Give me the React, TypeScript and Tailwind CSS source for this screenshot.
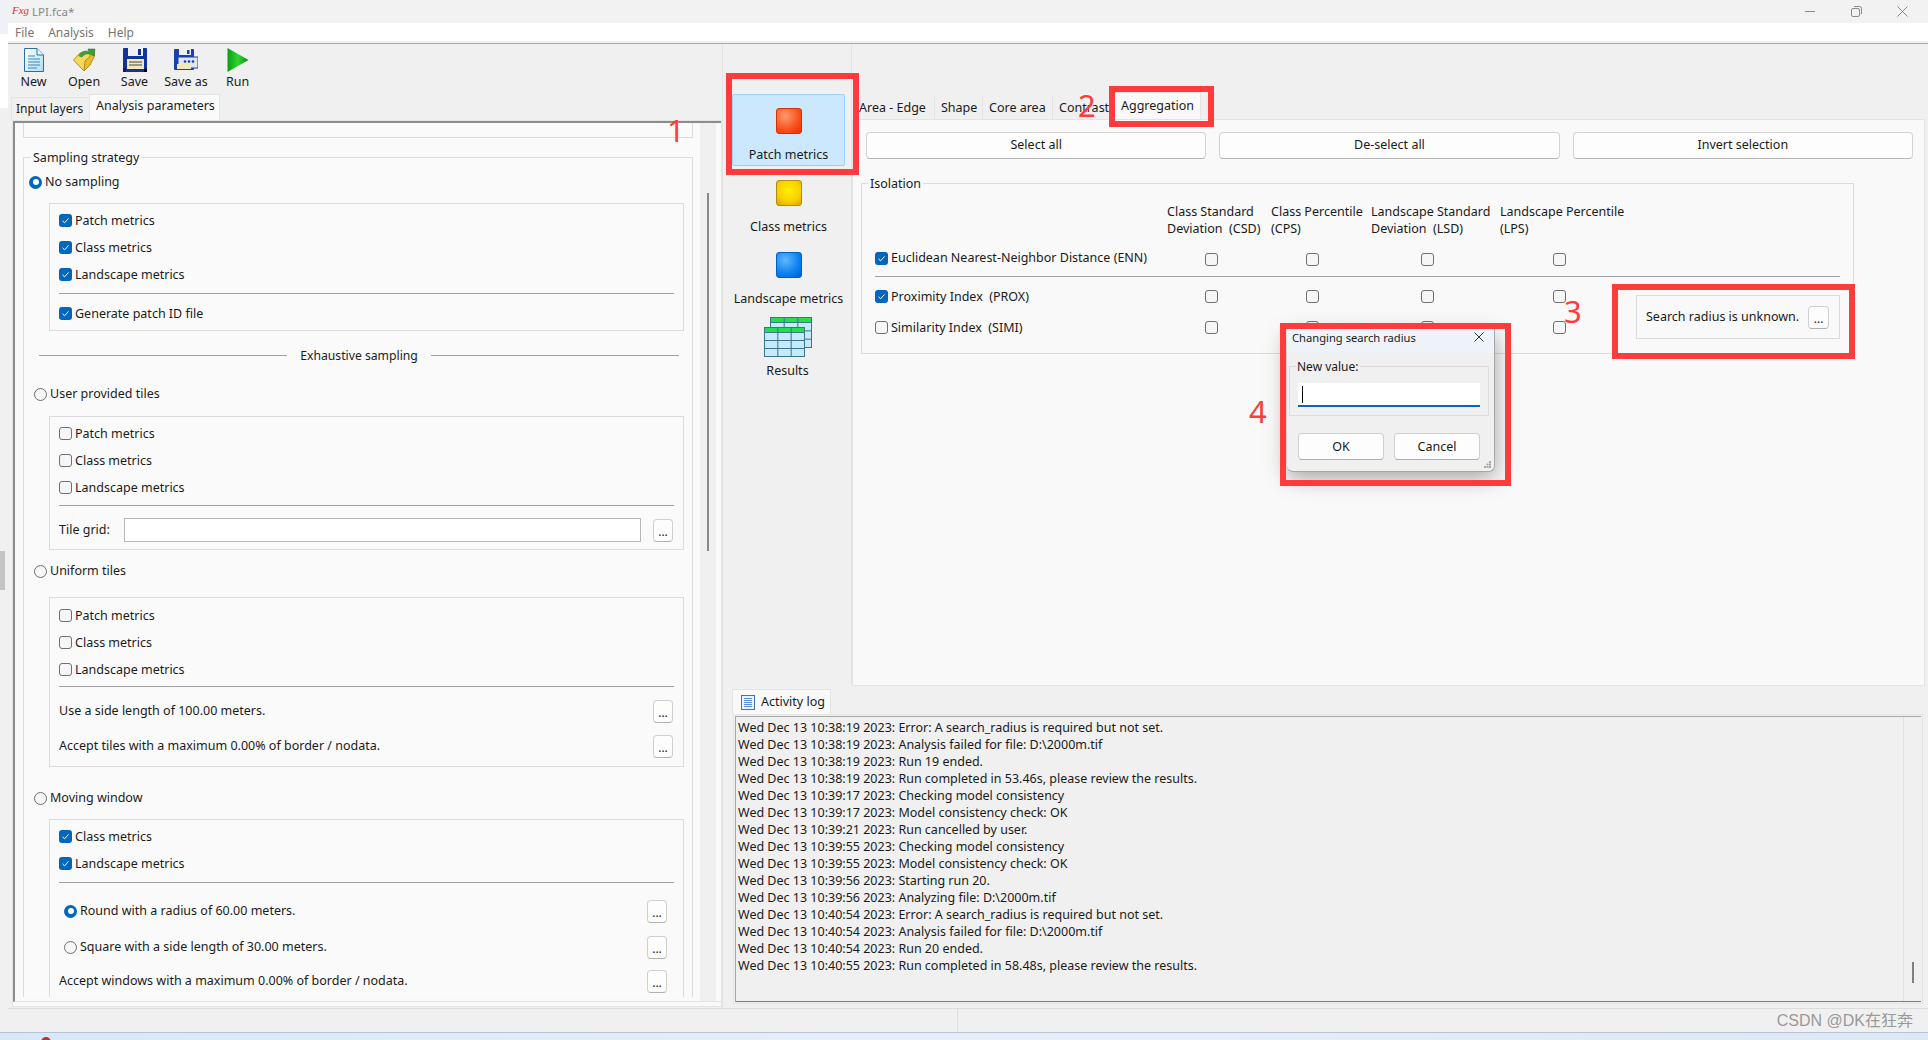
import React from 'react';

const LOG_LINES = [
	'Wed Dec 13 10:38:19 2023: Error: A search_radius is required but not set.',
	'Wed Dec 13 10:38:19 2023: Analysis failed for file: D:\\2000m.tif',
	'Wed Dec 13 10:38:19 2023: Run 19 ended.',
	'Wed Dec 13 10:38:19 2023: Run completed in 53.46s, please review the results.',
	'Wed Dec 13 10:39:17 2023: Checking model consistency',
	'Wed Dec 13 10:39:17 2023: Model consistency check: OK',
	'Wed Dec 13 10:39:21 2023: Run cancelled by user.',
	'Wed Dec 13 10:39:55 2023: Checking model consistency',
	'Wed Dec 13 10:39:55 2023: Model consistency check: OK',
	'Wed Dec 13 10:39:56 2023: Starting run 20.',
	'Wed Dec 13 10:39:56 2023: Analyzing file: D:\\2000m.tif',
	'Wed Dec 13 10:40:54 2023: Error: A search_radius is required but not set.',
	'Wed Dec 13 10:40:54 2023: Analysis failed for file: D:\\2000m.tif',
	'Wed Dec 13 10:40:54 2023: Run 20 ended.',
	'Wed Dec 13 10:40:55 2023: Run completed in 58.48s, please review the results.',
];

function Check({ checked = false, className = '' }: { checked?: boolean; className?: string }) {
	if (checked) {
		return (
			<span className={`w-[13px] h-[13px] shrink-0 rounded-[3px] bg-[#0067c0] flex items-center justify-center ${className}`}>
				<svg width="9" height="9" viewBox="0 0 9 9" fill="none" stroke="#fff" strokeWidth="1">
					<path d="M1.5 4.8 L3.6 6.8 L7.5 2.4" />
				</svg>
			</span>
		);
	}
	return <span className={`w-[13px] h-[13px] shrink-0 rounded-[3px] border border-[#707070] bg-[#f6f6f6] ${className}`} />;
}

function Radio({ checked = false }: { checked?: boolean }) {
	if (checked) {
		return (
			<span className="w-[13px] h-[13px] shrink-0 rounded-full bg-[#0067c0] flex items-center justify-center">
				<span className="w-[6px] h-[6px] rounded-full bg-white" />
			</span>
		);
	}
	return <span className="w-[13px] h-[13px] shrink-0 rounded-full border border-[#707070] bg-[#f6f6f6]" />;
}

function DotsButton({ className = 'w-[20px]' }: { className?: string }) {
	return (
		<span className={`h-[23px] shrink-0 rounded-[4px] border border-[#d0d0d0] border-b-[#b0b0b0] bg-[#fdfdfd] flex items-center justify-center text-[12px] leading-none pt-[3px] ${className}`}>
			...
		</span>
	);
}

function CheckRow({ label, checked = false }: { label: string; checked?: boolean }) {
	return (
		<div className="h-[27px] flex items-center gap-[3px]">
			<Check checked={checked} />
			<span className="pt-px">{label}</span>
		</div>
	);
}

function RadioRow({ label, checked = false, className = '' }: { label: string; checked?: boolean; className?: string }) {
	return (
		<div className={`h-[22px] flex items-center gap-[3px] ${className}`}>
			<Radio checked={checked} />
			<span>{label}</span>
		</div>
	);
}

function Rule({ className = '' }: { className?: string }) {
	return <div className={`h-px bg-[#a0a0a0] ${className}`} />;
}

function NewIcon() {
	return (
		<svg width="20" height="24" viewBox="0 0 20 24">
			<defs>
				<linearGradient id="docFill" x1="0" y1="0" x2="1" y2="1">
					<stop offset="0" stopColor="#ffffff" />
					<stop offset="1" stopColor="#a9def5" />
				</linearGradient>
			</defs>
			<path d="M0.5 0.5 H13 L19.5 7 V23.5 H0.5 Z" fill="url(#docFill)" stroke="#2a6f9e" />
			<path d="M13 0.5 V7 H19.5" fill="#e8f6fc" stroke="#2a6f9e" />
			<path d="M4 8 H11 M4 11 H16 M4 14 H16 M4 17 H16 M4 20 H13" stroke="#3d85b8" />
		</svg>
	);
}

function OpenIcon() {
	return (
		<svg width="23" height="24" viewBox="0 0 23 24">
			<path d="M11 23 L0.5 12 L7 5 L17 5 L17 17 Z" fill="#f7d95e" stroke="#b58d1c" />
			<path d="M11 23 L17 17 L21.5 8 L21.5 4 L12 13 Z" fill="#e9bb2e" stroke="#b58d1c" />
			<path d="M6 8 C8 3 13 2 16 4 L15 1 L22 1 L21 8 L18.5 6.5 C15 5 11 6 9 9 Z" fill="#3fa03a" stroke="#1f6f22" strokeWidth="0.5" />
		</svg>
	);
}

function SaveIcon() {
	return (
		<svg width="24" height="24" viewBox="0 0 24 24">
			<rect x="0" y="0" width="24" height="24" rx="1" fill="#13329a" />
			<rect x="5" y="0" width="15" height="8" fill="#eef1f7" />
			<rect x="15" y="1" width="3" height="6" fill="#13329a" />
			<rect x="4" y="11" width="17" height="10" fill="#f1e9bd" />
			<path d="M6 14 H19 M6 17 H19" stroke="#444" />
			<rect x="0" y="20" width="3" height="4" fill="#0b1d5f" />
			<rect x="21" y="21" width="3" height="3" fill="#000" />
		</svg>
	);
}

function SaveAsIcon() {
	return (
		<svg width="24" height="22" viewBox="0 0 24 22">
			<rect x="0" y="0" width="20" height="21" rx="1" fill="#1b3fae" />
			<rect x="5" y="0" width="12" height="6" fill="#eef1f7" />
			<rect x="13" y="1" width="2.5" height="4" fill="#1b3fae" />
			<rect x="4" y="8" width="20" height="11" fill="#dfe7f5" stroke="#1b3fae" />
			<rect x="3" y="15" width="14" height="5" fill="#f1e9bd" />
			<circle cx="11" cy="12.5" r="1.3" fill="#1b3fae" />
			<circle cx="15" cy="12.5" r="1.3" fill="#1b3fae" />
			<circle cx="19" cy="12.5" r="1.3" fill="#1b3fae" />
		</svg>
	);
}

function RunIcon() {
	return (
		<svg width="22" height="24" viewBox="0 0 22 24">
			<defs>
				<linearGradient id="runFill" x1="0" y1="0" x2="1" y2="0">
					<stop offset="0" stopColor="#0e9c14" />
					<stop offset="0.5" stopColor="#2fd433" />
					<stop offset="1" stopColor="#0d8a12" />
				</linearGradient>
			</defs>
			<path d="M0.5 0 L21.5 12 L0.5 24 Z" fill="url(#runFill)" />
		</svg>
	);
}

function ResultsIcon() {
	const grid = (x: number, y: number, w: number, h: number) => (
		<g>
			<rect x={x} y={y} width={w} height={h} fill="#c5eafa" stroke="#3b7390" />
			<rect x={x} y={y} width={w} height={5} fill="#22e04a" stroke="#3b7390" />
			<path
				d={`M${x + w / 3} ${y} V${y + h} M${x + (2 * w) / 3} ${y} V${y + h} M${x} ${y + 5 + (h - 5) / 3} H${x + w} M${x} ${y + 5 + (2 * (h - 5)) / 3} H${x + w}`}
				stroke="#3b7390"
				fill="none"
			/>
		</g>
	);
	return (
		<svg width="48" height="40" viewBox="0 0 48 40">
			{grid(6.5, 0.5, 41, 30)}
			{grid(0.5, 10.5, 40, 29)}
		</svg>
	);
}

function LogIcon() {
	return (
		<svg width="14" height="15" viewBox="0 0 14 15">
			<rect x="0.5" y="0.5" width="13" height="14" fill="#e8f2fb" stroke="#3f74b5" />
			<path d="M3 3.5 H11 M3 5.5 H11 M3 7.5 H11 M3 9.5 H11 M3 11.5 H11" stroke="#5a8fd0" />
		</svg>
	);
}

function TopToolbar() {
	const items = [
		{ label: 'New', width: 'w-[51px]', icon: <NewIcon /> },
		{ label: 'Open', width: 'w-[50px]', icon: <OpenIcon /> },
		{ label: 'Save', width: 'w-[51px]', icon: <SaveIcon /> },
		{ label: 'Save as', width: 'w-[52px]', icon: <SaveAsIcon /> },
		{ label: 'Run', width: 'w-[51px]', icon: <RunIcon /> },
	];
	return (
		<div className="h-[50px] flex pt-[4px]">
			{items.map((item) => (
				<div key={item.label} className={`${item.width} flex flex-col items-center`}>
					<div className="h-[24px] flex items-center">{item.icon}</div>
					<span className="mt-[1px] leading-[18px] whitespace-nowrap">{item.label}</span>
				</div>
			))}
		</div>
	);
}

function SamplingPanel() {
	return (
		<div className="flex-1 min-h-0 ml-[4px] mb-px border border-[#e4e4e4] bg-[#f9f9f9] flex">
			<div className="flex-1 min-w-0 flex pb-[4px]">
				<div className="flex-1 min-w-0 flex border-l-2 border-t-2 border-[#8c8c8c] border-b border-b-[#e4e4e4]">
					<div className="flex-1 min-w-0 h-[874px] overflow-hidden bg-[#fafafa] pl-[8px]">
						<div className="w-[670px] h-[15px] border-x border-b border-[#dcdcdc]" />
						<div className="w-[670px] mt-[19px] border border-[#dcdcdc] h-[900px]">
							<span className="block w-fit -mt-[9px] ml-[7px] px-[2px] bg-[#fafafa] leading-[18px]">Sampling strategy</span>
							<RadioRow label="No sampling" checked className="mt-[4px] ml-[5px]" />
							<div className="ml-[25px] w-[635px] mt-[10px] border border-[#dcdcdc] px-[9px] pt-[3px] pb-[3px]">
								<CheckRow label="Patch metrics" checked />
								<CheckRow label="Class metrics" checked />
								<CheckRow label="Landscape metrics" checked />
								<Rule className="mt-[5px] mb-[6px]" />
								<CheckRow label="Generate patch ID file" checked />
							</div>

							<div className="mt-[15px] ml-[15px] w-[640px] h-[18px] flex items-center gap-[13px] text-[12.2px]">
								<Rule className="flex-1" />
								<span className="pt-[2px]">Exhaustive sampling</span>
								<Rule className="flex-1" />
							</div>

							<RadioRow label="User provided tiles" className="mt-[19px] ml-[10px]" />
							<div className="ml-[25px] w-[635px] mt-[11px] border border-[#dcdcdc] px-[9px] pt-[3px] pb-[4px]">
								<CheckRow label="Patch metrics" />
								<CheckRow label="Class metrics" />
								<CheckRow label="Landscape metrics" />
								<Rule className="mt-[4px]" />
								<div className="mt-[9px] h-[30px] flex items-center">
									<span className="w-[65px]">Tile grid:</span>
									<span className="w-[517px] h-[24px] border border-[#b8b8b8] bg-white" />
									<DotsButton className="ml-[12px] w-[20px]" />
								</div>
							</div>

							<RadioRow label="Uniform tiles" className="mt-[10px] ml-[10px]" />
							<div className="ml-[25px] w-[635px] mt-[15px] border border-[#dcdcdc] px-[9px] pt-[4px] pb-[5px]">
								<CheckRow label="Patch metrics" />
								<CheckRow label="Class metrics" />
								<CheckRow label="Landscape metrics" />
								<Rule className="mt-[3px]" />
								<div className="mt-[9px] h-[30px] flex items-center justify-between pr-[1px]">
									<span>Use a side length of 100.00 meters.</span>
									<DotsButton />
								</div>
								<div className="mt-[5px] h-[30px] flex items-center justify-between pr-[1px]">
									<span>Accept tiles with a maximum 0.00% of border / nodata.</span>
									<DotsButton />
								</div>
							</div>

							<RadioRow label="Moving window" className="mt-[20px] ml-[10px]" />
							<div className="ml-[25px] w-[635px] mt-[10px] border border-[#dcdcdc] pt-[3px] h-[300px]">
								<div className="px-[9px]">
									<CheckRow label="Class metrics" checked />
									<CheckRow label="Landscape metrics" checked />
									<Rule className="mt-[5px]" />
								</div>
								<div className="pr-[16px]">
									<div className="mt-[13px] h-[30px] pl-[14px] flex items-center justify-between">
										<div className="flex items-center gap-[3px]">
											<Radio checked />
											<span>Round with a radius of 60.00 meters.</span>
										</div>
										<DotsButton />
									</div>
									<div className="mt-[6px] h-[30px] pl-[14px] flex items-center justify-between">
										<div className="flex items-center gap-[3px]">
											<Radio />
											<span>Square with a side length of 30.00 meters.</span>
										</div>
										<DotsButton />
									</div>
									<div className="mt-[4px] h-[30px] pl-[9px] flex items-center justify-between">
										<span>Accept windows with a maximum 0.00% of border / nodata.</span>
										<DotsButton />
									</div>
								</div>
							</div>
						</div>
					</div>
					{/* scrollbar */}
					<div className="w-[16px] bg-[#f0f0f0] flex justify-center pt-[70px]">
						<div className="w-[2px] h-[358px] bg-[#8a8a8a]" />
					</div>
					<div className="w-[5px] bg-[#fafafa]" />
				</div>
			</div>
		</div>
	);
}

function NavItem({ label, swatch, selected = false }: { label: string; swatch: string; selected?: boolean }) {
	return (
		<div className={`ml-[9px] w-[113px] h-[72px] flex flex-col items-center pt-[13px] rounded-[2px] border ${selected ? 'bg-[#cce8ff] border-[#99d1ff]' : 'border-transparent'}`}>
			<span className={`w-[26px] h-[26px] rounded-[3px] ${swatch}`} />
			<span className="mt-[12px] leading-[18px] whitespace-nowrap">{label}</span>
		</div>
	);
}

function IsolationGroup() {
	const boxes = ['ml-[38px]', 'ml-[35px]', 'ml-[50px]', 'ml-[53px]'];
	const rows = [
		{ label: 'Proximity Index  (PROX)', checked: true },
		{ label: 'Similarity Index  (SIMI)', checked: false },
	];
	return (
		<div className="ml-[8px] w-[993px] h-[171px] border border-[#dcdcdc] mt-[24px]">
			<span className="block w-fit -mt-[9px] ml-[6px] px-[2px] bg-[#f9f9f9] leading-[18px]">Isolation</span>
			<div className="ml-[13px] mt-[10px] grid grid-cols-[292px_104px_100px_129px_136px_204px] w-[965px]">
				<div className="h-[34px]" />
				<div className="leading-[17px] whitespace-pre">{'Class Standard\nDeviation  (CSD)'}</div>
				<div className="leading-[17px] whitespace-pre">{'Class Percentile\n(CPS)'}</div>
				<div className="leading-[17px] whitespace-pre">{'Landscape Standard\nDeviation  (LSD)'}</div>
				<div className="leading-[17px] whitespace-pre">{'Landscape Percentile\n(LPS)'}</div>
				<div />

				<div className="mt-[7px] h-[28px] flex items-center gap-[3px]">
					<Check checked />
					<span>Euclidean Nearest-Neighbor Distance (ENN)</span>
				</div>
				{boxes.map((b) => (
					<div key={b} className="mt-[8px] h-[28px] flex items-center">
						<Check className={b} />
					</div>
				))}
				<div />
				<div className="col-span-6 h-px bg-[#a0a0a0] mt-[3px] w-[965px] mb-[4px]" />

				{rows.map((row, i) => (
					<React.Fragment key={row.label}>
						<div className="h-[31px] flex items-center gap-[3px] whitespace-pre">
							<Check checked={row.checked} />
							<span className="pt-px">{row.label}</span>
						</div>
						{boxes.map((b) => (
							<div key={b} className="h-[31px] flex items-center">
								<Check className={b} />
							</div>
						))}
						{i === 0 ? (
							<div className="row-span-2 self-start">
								<div className="w-[204px] h-[44px] mt-[14px] border border-[#dcdcdc] flex items-center pl-[9px] gap-[9px]">
									<span className="whitespace-nowrap">Search radius is unknown.</span>
									<DotsButton className="w-[21px]" />
								</div>
							</div>
						) : null}
					</React.Fragment>
				))}
			</div>
		</div>
	);
}

function MetricsArea() {
	const tabs = [
		{ label: 'Area - Edge', w: 'w-[76px]', pl: 'pl-[0px]' },
		{ label: 'Shape', w: 'w-[48px]', pl: 'pl-[6px]' },
		{ label: 'Core area', w: 'w-[70px]', pl: 'pl-[6px]' },
		{ label: 'Contrast', w: 'w-[57px]', pl: 'pl-[6px]' },
	];
	return (
		<div className="flex-1 min-h-0 flex">
			<div className="w-[129px] pt-[50px] border-r border-[#e4e4e4]">
				<NavItem label="Patch metrics" selected swatch="bg-[radial-gradient(circle_at_35%_30%,#ff9a6a,#f8501c_60%,#e83000)] border border-[#d83000]" />
				<NavItem label="Class metrics" swatch="bg-[radial-gradient(circle_at_50%_40%,#fff000,#f8d000_60%,#d8a000)] border border-[#b88a10]" />
				<NavItem label="Landscape metrics" swatch="bg-[radial-gradient(circle_at_35%_30%,#60b8ff,#0a80f0_60%,#0060d0)] border border-[#0060c0]" />
				<div className="w-[129px] h-[72px] flex flex-col items-center pt-[7px]">
					<ResultsIcon />
					<span className="mt-[5px] leading-[18px]">Results</span>
				</div>
			</div>
			<div className="flex-1 min-w-0 flex flex-col pt-[48px] pr-[3px]">
				<div className="h-[27px] flex items-end pl-[7px]">
					{tabs.map((tab) => (
						<div key={tab.label} className={`h-[23px] border-r border-[#e4e4e4] leading-[23px] whitespace-nowrap ${tab.w} ${tab.pl}`}>
							{tab.label}
						</div>
					))}
					<div className="ml-[1px] w-[90px] h-[27px] bg-[#f9f9f9] border-x border-t border-[#e4e4e4] pl-[9px] leading-[26px] whitespace-nowrap">Aggregation</div>
				</div>
				<div className="flex-1 min-h-0 bg-[#f9f9f9] border border-[#e4e4e4] mb-[-1px]">
					<div className="mt-[12px] ml-[13px] mr-[11px] grid grid-cols-3 gap-[13px]">
						{['Select all', 'De-select all', 'Invert selection'].map((label) => (
							<div key={label} className="h-[27px] rounded-[4px] border border-[#d4d4d4] border-b-[#b4b4b4] bg-[#fdfdfd] flex items-center justify-center">
								{label}
							</div>
						))}
					</div>
					<IsolationGroup />
				</div>
			</div>
		</div>
	);
}

function ActivityLog() {
	return (
		<div className="h-[323px] flex flex-col pl-[10px] pr-[5px] pt-[4px]">
			<div className="-ml-[1px] w-[99px] h-[25px] bg-[#f9f9f9] border-x border-t border-[#e4e4e4] flex items-center pl-[8px] gap-[6px]">
				<LogIcon />
				<span>Activity log</span>
			</div>
			<div className="flex-1 min-h-0 mb-[4px] flex border border-[#e4e4e4] p-px">
				<div className="flex-1 min-w-0 flex border-l border-t border-b border-[#a8a8a8] border-b-[#808080] bg-[#f0f0f0]">
					<div className="flex-1 min-w-0 pl-[2px] pt-[2px]">
						{LOG_LINES.map((line, i) => (
							<div key={i} className="h-[17px] leading-[17px] whitespace-nowrap">{line}</div>
						))}
					</div>
					<div className="w-[18px] border-l border-[#e0e0e0] flex justify-center items-end pb-[18px]">
						<div className="w-[2px] h-[21px] bg-[#808080]" />
					</div>
				</div>
			</div>
		</div>
	);
}

function SearchRadiusDialog() {
	return (
		<div className="absolute left-[1287px] top-[329px] w-[208px] h-[143px] rounded-b-[6px] bg-[#f0f0f0] shadow-[0_6px_22px_rgba(0,0,0,0.35)] border-b border-r border-[#a8a8a8]">
			<div className="h-[24px] bg-[#eef3fa] flex items-start justify-between pl-[5px] pr-[10px] pt-[2px]">
				<span className="text-[11.2px] leading-[14px]">Changing search radius</span>
				<svg className="mt-[1px]" width="10" height="10" viewBox="0 0 10 10" stroke="#333" strokeWidth="1">
					<path d="M0.5 0.5 L9.5 9.5 M9.5 0.5 L0.5 9.5" />
				</svg>
			</div>
			<div className="mt-[13px] ml-[2px] mr-[5px] h-[50px] border border-[#dcdcdc]">
				<span className="block w-fit -mt-[9px] ml-[6px] px-[1px] bg-[#f0f0f0] leading-[18px] text-[12px]">New value:</span>
				<div className="mt-[7px] ml-[8px] w-[182px] h-[24px] bg-white border-b-2 border-[#0067c0] flex items-center pl-[4px]">
					<span className="w-px h-[17px] bg-black" />
				</div>
			</div>
			<div className="mt-[17px] ml-[11px] flex gap-[10px]">
				<div className="w-[86px] h-[27px] rounded-[4px] border border-[#d0d0d0] border-b-[#b0b0b0] bg-[#fdfdfd] flex items-center justify-center pt-px">OK</div>
				<div className="w-[86px] h-[27px] rounded-[4px] border border-[#d0d0d0] border-b-[#b0b0b0] bg-[#fdfdfd] flex items-center justify-center pt-px">Cancel</div>
			</div>
			<svg className="absolute right-[2px] bottom-[2px]" width="8" height="8" viewBox="0 0 8 8" fill="#a8a8a8">
				<rect x="5" y="0" width="2" height="2" />
				<rect x="2.500" y="2.500" width="2" height="2" />
				<rect x="5" y="2.500" width="2" height="2" />
				<rect x="0" y="5" width="2" height="2" />
				<rect x="2.500" y="5" width="2" height="2" />
				<rect x="5" y="5" width="2" height="2" />
			</svg>
		</div>
	);
}

export default function App() {
	return (
		<div className="w-[1928px] h-[1040px] relative overflow-hidden flex flex-col bg-[#f0f0f0] text-[#1a1a1a] text-[12.5px] font-['Noto_Sans',sans-serif]">
			<div className="flex-1 min-h-0 flex">
				{/* 隣のウィンドウの端 */}
				<div className="w-[8px] flex flex-col bg-[#f0f0f0]">
					<div className="h-[34px] bg-[#f0f1f8]" />
					<div className="h-[74px] bg-white" />
					<div className="mt-[443px] w-[5px] h-[39px] bg-[#c4c4c4]" />
				</div>

				<div className="flex-1 min-w-0 flex flex-col">
					<div className="h-[23px] bg-[#f2f2f2] flex items-center pl-[4px] text-[#888] text-[11.5px]">
						<span className="w-[20px] pb-[3px] text-[#e03030] text-[11px] italic font-['Liberation_Serif',serif] leading-none">Fxg</span>
						<span>LPI.fca*</span>
						<div className="ml-auto flex items-center gap-[35px] pr-[20px]">
							<svg width="11" height="11" viewBox="0 0 11 11" stroke="#8a8a8a" fill="none"><path d="M0 5.500 H10" /></svg>
							<svg width="11" height="11" viewBox="0 0 11 11" stroke="#8a8a8a" fill="none">
								<rect x="0.500" y="2.500" width="8" height="8" rx="1.500" />
								<path d="M3 0.500 H8.500 Q10.500 0.500 10.500 2.500 V8" />
							</svg>
							<svg width="11" height="11" viewBox="0 0 11 11" stroke="#8a8a8a" fill="none"><path d="M0.500 0.500 L10.500 10.500 M10.500 0.500 L0.500 10.500" /></svg>
						</div>
					</div>
					<div className="h-[18px] bg-white flex items-center pl-[7px] pt-[2px] gap-[14px] text-[12px] text-[#757575]">
						<span>File</span>
						<span>Analysis</span>
						<span>Help</span>
					</div>
					<div className="h-[3px] border-b border-[#a8a8a8]" />

					<div className="flex-1 min-h-0 flex">
						<div className="w-[714px] flex flex-col">
							<TopToolbar />
							<div className="h-[26px] flex items-end pl-[3px]">
								<div className="w-[78px] h-[23px] bg-[#f0f0f0] border-l border-t border-[#e4e4e4] pl-[4px] leading-[21px] text-[12px] whitespace-nowrap">Input layers</div>
								<div className="w-[131px] h-[26px] bg-[#fafafa] border-x border-t border-[#e4e4e4] pl-[6px] leading-[21px] whitespace-nowrap">Analysis parameters</div>
							</div>
							<SamplingPanel />
						</div>
						<div className="flex-1 min-w-0 flex flex-col border-l border-[#e4e4e4]">
							<MetricsArea />
							<ActivityLog />
						</div>
					</div>

					<div className="h-[24px] border-t border-[#dcdcdc] flex">
						<div className="w-[950px] border-r border-[#dcdcdc]" />
						<div className="flex-1 flex items-center justify-end pr-[15px] text-[16px] text-[#999] font-['Liberation_Sans','Noto_Sans_CJK_SC',sans-serif]">
							CSDN @DK在狂奔
						</div>
					</div>
				</div>
			</div>
			<div className="h-[8px] border-t border-[#b8c4d4] bg-gradient-to-r from-[#d8e8f8] via-[#e6eef8] to-[#dce8f6] pl-[41px] pt-[4px]">
				<div className="w-[10px] h-[10px] rounded-full bg-[#c03030]" />
			</div>

			{/* 注釈 */}
			<SearchRadiusDialog />
			<div className="absolute left-[726px] top-[73px] w-[133px] h-[102px] border-[6px] border-[#ff3b3b]" />
			<div className="absolute left-[1109px] top-[86px] w-[105px] h-[41px] border-[6px] border-[#ff3b3b]" />
			<div className="absolute left-[1612px] top-[284px] w-[243px] h-[75px] border-[6px] border-[#ff3b3b]" />
			<div className="absolute left-[1280px] top-[323px] w-[231px] h-[163px] border-[6px] border-[#ff3b3b]" />
			<span className="absolute left-[667px] top-[110px] text-[31px] leading-[40px] text-[#ff3b3b]">1</span>
			<span className="absolute left-[1078px] top-[85px] text-[31px] leading-[40px] text-[#ff3b3b]">2</span>
			<span className="absolute left-[1564px] top-[291px] text-[31px] leading-[40px] text-[#ff3b3b]">3</span>
			<span className="absolute left-[1249px] top-[391px] text-[31px] leading-[40px] text-[#ff3b3b]">4</span>
		</div>
	);
}
